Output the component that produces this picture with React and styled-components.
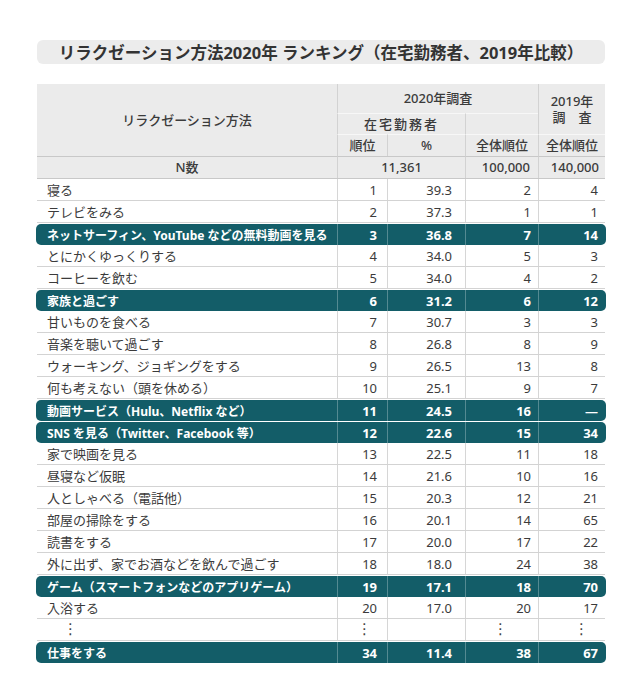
import React from "react";
import styled, { createGlobalStyle, css } from "styled-components";

const GlobalStyle = createGlobalStyle`
  html, body { margin: 0; padding: 0; background: #fff; }
  body {
    font-family: "Noto Sans", "Noto Sans CJK JP", sans-serif;
    color: #3b3b3b;
  }
`;

const COLS = "300px 50px 78px 73px 67px";
const TEAL = "#135d68";

const Page = styled.div`
  padding: 40px 0 0 37px;
  width: 568px;
`;

const Title = styled.h1`
  margin: 0;
  height: 24px;
  background: #ececec;
  border-radius: 6px;
  display: flex;
  align-items: center;
  justify-content: center;
  font-size: 16.5px;
  font-weight: 700;
  color: #333;
`;

const Table = styled.div`
  margin-top: 20px;
`;

const Header = styled.div`
  display: grid;
  grid-template-columns: ${COLS};
  grid-template-rows: 29px 21px 22px 22px;
  background: #ebebeb;
  border-bottom: 1px solid #c8c8c8;
`;

const HCell = styled.div`
  grid-column: ${(p) => p.$col};
  grid-row: ${(p) => p.$row};
  box-sizing: border-box;
  display: flex;
  flex-direction: column;
  align-items: ${(p) => p.$align || "center"};
  justify-content: center;
  padding: 0 ${(p) => p.$pad || 0}px;
  border-left: ${(p) => (p.$noLeft ? "none" : "1px solid #d2d2d2")};
  border-top: ${(p) => (p.$top ? `1px solid ${p.$top}` : "none")};
  font-size: 13px;
  font-weight: 500;
  line-height: 1.25;
  letter-spacing: ${(p) => p.$ls || 0}px;
  color: #3b3b3b;
`;

const Row = styled.div`
  display: grid;
  grid-template-columns: ${COLS};
  height: 22px;
  box-sizing: border-box;
  border-bottom: 1px solid #d3d3d3;
  font-size: 13px;
  color: #3b3b3b;
  ${(p) =>
    p.$hl &&
    css`
      background: ${TEAL};
      color: #fff;
      font-weight: 700;
      font-size: 12px;
      border-radius: 5px;
      border-bottom: none;
      height: 21px;
      margin: 1px -1px 0;
      padding: 0 1px;
    `}
`;

const Cell = styled.div`
  display: flex;
  align-items: center;
  justify-content: ${(p) => p.$align || "flex-end"};
  padding: 0 ${(p) => p.$pr || 0}px 0 ${(p) => p.$pl || 0}px;
  border-left: ${(p) =>
    p.$first ? "none" : p.$hl ? "1px solid rgba(255,255,255,0.28)" : "1px solid #d6d6d6"};
  white-space: nowrap;
  overflow: hidden;
`;

const Num = styled.span`
  font-size: 13px;
`;

const Dots = styled.span`
  font-size: 15px;
  line-height: 1;
  font-family: "DejaVu Sans", sans-serif;
  color: #444;
`;

const rows = [
  ["寝る", "1", "39.3", "2", "4"],
  ["テレビをみる", "2", "37.3", "1", "1"],
  ["ネットサーフィン、YouTube などの無料動画を見る", "3", "36.8", "7", "14", true],
  ["とにかくゆっくりする", "4", "34.0", "5", "3"],
  ["コーヒーを飲む", "5", "34.0", "4", "2"],
  ["家族と過ごす", "6", "31.2", "6", "12", true],
  ["甘いものを食べる", "7", "30.7", "3", "3"],
  ["音楽を聴いて過ごす", "8", "26.8", "8", "9"],
  ["ウォーキング、ジョギングをする", "9", "26.5", "13", "8"],
  ["何も考えない（頭を休める）", "10", "25.1", "9", "7"],
  ["動画サービス（Hulu、Netflix など）", "11", "24.5", "16", "—", true],
  ["SNS を見る（Twitter、Facebook 等）", "12", "22.6", "15", "34", true],
  ["家で映画を見る", "13", "22.5", "11", "18"],
  ["昼寝など仮眠", "14", "21.6", "10", "16"],
  ["人としゃべる（電話他）", "15", "20.3", "12", "21"],
  ["部屋の掃除をする", "16", "20.1", "14", "65"],
  ["読書をする", "17", "20.0", "17", "22"],
  ["外に出ず、家でお酒などを飲んで過ごす", "18", "18.0", "24", "38"],
  ["ゲーム（スマートフォンなどのアプリゲーム）", "19", "17.1", "18", "70", true],
  ["入浴する", "20", "17.0", "20", "17"],
];

function DataRow({ r }) {
  const [name, rank, pct, all, y19, hl] = r;
  return (
    <Row $hl={hl}>
      <Cell $first $hl={hl} $align="flex-start" $pl={10}>{name}</Cell>
      <Cell $hl={hl} $pr={10}><Num>{rank}</Num></Cell>
      <Cell $hl={hl} $pr={13}><Num>{pct}</Num></Cell>
      <Cell $hl={hl} $pr={7}><Num>{all}</Num></Cell>
      <Cell $hl={hl} $pr={7}><Num>{y19}</Num></Cell>
    </Row>
  );
}

export default function App() {
  return (
    <>
      <GlobalStyle />
      <Page>
        <Title>リラクゼーション方法2020年 ランキング（在宅勤務者、2019年比較）</Title>
        <Table>
          <Header>
            <HCell $col="1" $row="1 / 4" $noLeft>リラクゼーション方法</HCell>
            <HCell $col="2 / 5" $row="1">2020年調査</HCell>
            <HCell $col="5" $row="1 / 3">
              <span>2019年</span>
              <span>調　査</span>
            </HCell>
            <HCell $col="2 / 4" $row="2" $top="#f7f7f7" $ls={2}>在宅勤務者</HCell>
            <HCell $col="4" $row="2" $top="#f7f7f7" />
            <HCell $col="2" $row="3" $top="#f7f7f7">順位</HCell>
            <HCell $col="3" $row="3" $top="#f7f7f7">%</HCell>
            <HCell $col="4" $row="3" $top="#f7f7f7">全体順位</HCell>
            <HCell $col="5" $row="3" $top="#f7f7f7">全体順位</HCell>
            <HCell $col="1" $row="4" $noLeft $top="#c8c8c8">N数</HCell>
            <HCell $col="2 / 4" $row="4" $top="#c8c8c8">11,361</HCell>
            <HCell $col="4" $row="4" $top="#c8c8c8" $align="flex-end" $pad={8}>100,000</HCell>
            <HCell $col="5" $row="4" $top="#c8c8c8" $align="flex-end" $pad={6}>140,000</HCell>
          </Header>
          {rows.map((r) => (
            <DataRow key={r[0]} r={r} />
          ))}
          <Row>
            <Cell $first $align="flex-start" $pl={26}><Dots>⋮</Dots></Cell>
            <Cell $pr={15}><Dots>⋮</Dots></Cell>
            <Cell />
            <Cell $pr={30}><Dots>⋮</Dots></Cell>
            <Cell $pr={16}><Dots>⋮</Dots></Cell>
          </Row>
          <DataRow r={["仕事をする", "34", "11.4", "38", "67", true]} />
        </Table>
      </Page>
    </>
  );
}
